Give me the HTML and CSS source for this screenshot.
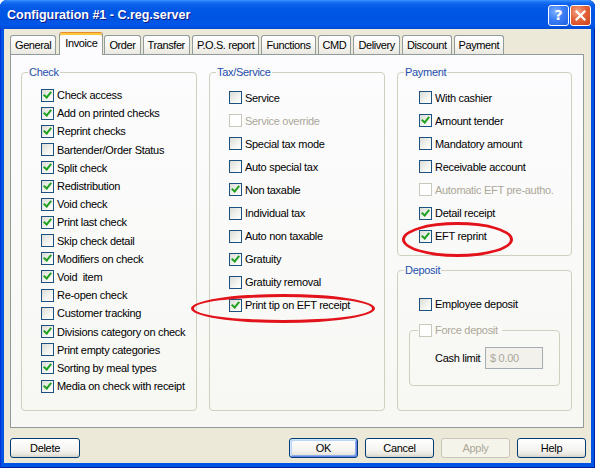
FILE: index.html
```html
<!DOCTYPE html>
<html>
<head>
<meta charset="utf-8">
<title>Configuration #1 - C.reg.server</title>
<link rel="stylesheet" href="styles.css">
</head>
<body>
<div class="window">
  <div class="titlebar">
    <span class="title">Configuration #1 - C.reg.server</span>
    <div class="tb-btns">
      <span class="tb-btn tb-help">?</span>
      <span class="tb-btn tb-close"><svg width="11" height="11" viewBox="0 0 11 11"><path d="M1.5 1.5 L9.5 9.5 M9.5 1.5 L1.5 9.5" stroke="#fff" stroke-width="2.2" stroke-linecap="square"/></svg></span>
    </div>
  </div>
  <div class="client">
    <div class="tabs">
      <span class="tab">General</span>
      <span class="tab active">Invoice</span>
      <span class="tab">Order</span>
      <span class="tab">Transfer</span>
      <span class="tab">P.O.S. report</span>
      <span class="tab">Functions</span>
      <span class="tab">CMD</span>
      <span class="tab">Delivery</span>
      <span class="tab">Discount</span>
      <span class="tab">Payment</span>
    </div>
    <div class="panel">
      <div class="group g-check">
        <span class="legend">Check</span>
        <div class="row"><span class="cb on"></span>Check access</div>
        <div class="row"><span class="cb on"></span>Add on printed checks</div>
        <div class="row"><span class="cb on"></span>Reprint checks</div>
        <div class="row"><span class="cb"></span>Bartender/Order Status</div>
        <div class="row"><span class="cb on"></span>Split check</div>
        <div class="row"><span class="cb on"></span>Redistribution</div>
        <div class="row"><span class="cb on"></span>Void check</div>
        <div class="row"><span class="cb on"></span>Print last check</div>
        <div class="row"><span class="cb"></span>Skip check detail</div>
        <div class="row"><span class="cb on"></span>Modifiers on check</div>
        <div class="row"><span class="cb on"></span>Void &nbsp;item</div>
        <div class="row"><span class="cb"></span>Re-open check</div>
        <div class="row"><span class="cb"></span>Customer tracking</div>
        <div class="row"><span class="cb on"></span>Divisions category on check</div>
        <div class="row"><span class="cb"></span>Print empty categories</div>
        <div class="row"><span class="cb on"></span>Sorting by meal types</div>
        <div class="row"><span class="cb on"></span>Media on check with receipt</div>
      </div>
      <div class="group g-tax">
        <span class="legend">Tax/Service</span>
        <div class="row wide"><span class="cb"></span>Service</div>
        <div class="row wide disabled"><span class="cb"></span>Service override</div>
        <div class="row wide"><span class="cb"></span>Special tax mode</div>
        <div class="row wide"><span class="cb"></span>Auto special tax</div>
        <div class="row wide"><span class="cb on"></span>Non taxable</div>
        <div class="row wide"><span class="cb"></span>Individual tax</div>
        <div class="row wide"><span class="cb"></span>Auto non taxable</div>
        <div class="row wide"><span class="cb on"></span>Gratuity</div>
        <div class="row wide"><span class="cb"></span>Gratuity removal</div>
        <div class="row wide"><span class="cb on"></span>Print tip on EFT receipt</div>
      </div>
      <div class="col3">
        <div class="group g-pay">
          <span class="legend">Payment</span>
          <div class="row wide"><span class="cb"></span>With cashier</div>
          <div class="row wide"><span class="cb on"></span>Amount tender</div>
          <div class="row wide"><span class="cb"></span>Mandatory amount</div>
          <div class="row wide"><span class="cb"></span>Receivable account</div>
          <div class="row wide disabled"><span class="cb"></span>Automatic EFT pre-autho.</div>
          <div class="row wide"><span class="cb on"></span>Detail receipt</div>
          <div class="row wide"><span class="cb on"></span>EFT reprint</div>
        </div>
        <div class="group g-dep">
          <span class="legend">Deposit</span>
          <div class="row wide"><span class="cb"></span>Employee deposit</div>
          <div class="group g-force">
            <span class="legend legend-cb disabled"><span class="cb"></span>Force deposit</span>
            <div class="cash-row">
              <span class="cash-label">Cash limit</span>
              <span class="cash-input">$ 0.00</span>
            </div>
          </div>
        </div>
      </div>
    </div>
    <div class="buttons">
      <span class="btn btn-delete">Delete</span>
      <div class="btn-group">
        <span class="btn default">OK</span>
        <span class="btn">Cancel</span>
        <span class="btn disabled">Apply</span>
        <span class="btn">Help</span>
      </div>
    </div>
  </div>
  <span class="mark mark-tip"></span>
  <span class="mark mark-eft"></span>
</div>
</body>
</html>
```

FILE: styles.css
```css
html, body {
  margin: 0;
  padding: 0;
  background: #ffffff;
}

body {
  font-family: "Liberation Sans", Arial, sans-serif;
  font-size: 11px;
  letter-spacing: -0.3px;
  color: #000;
}

.window {
  position: relative;
  width: 595px;
  height: 468px;
  box-sizing: border-box;
  background: #0054E3;
  border-radius: 7px 7px 0 0;
  display: flex;
  flex-direction: column;
  overflow: hidden;
  box-shadow: inset 1px 0 #0831D9, inset -1px 0 #001EA0, inset 0 -1px #001EA0;
}

.titlebar {
  height: 29px;
  flex: none;
  display: flex;
  align-items: center;
  justify-content: space-between;
  background: linear-gradient(to bottom, #3D95FF 0px, #1A72F6 2px, #0A5EEA 5px, #0058E6 10px, #0054E3 18px, #0056E7 25px, #004AD4 29px);
}

.title {
  padding-left: 7px;
  color: #ffffff;
  font-family: "Liberation Sans", Arial, sans-serif;
  font-weight: bold;
  font-size: 12.5px;
  letter-spacing: 0;
  text-shadow: 1px 1px #0F1A89;
  margin-top: 1px;
}

.tb-btns {
  display: flex;
  gap: 1px;
  padding-right: 4px;
  margin-top: 1px;
}

.tb-btn {
  width: 21px;
  height: 21px;
  box-sizing: border-box;
  border: 1px solid #ffffff;
  border-radius: 3px;
  display: flex;
  align-items: center;
  justify-content: center;
  color: #ffffff;
  letter-spacing: 0;
}

.tb-help {
  background: radial-gradient(circle at 35% 30%, #7FB1FF 0%, #3C7EF5 45%, #1E5FE6 100%);
  font-family: "DejaVu Sans", sans-serif;
  font-weight: bold;
  font-size: 14px;
  line-height: 19px;
}

.tb-close {
  background: radial-gradient(circle at 35% 30%, #F6A488 0%, #E4643A 45%, #C9421C 100%);
}

.client {
  flex: 1;
  margin: 0 4px 5px 4px;
  background: #ECE9D8;
  padding: 3px 7px 5px 6px;
  display: flex;
  flex-direction: column;
}

.tabs {
  height: 22px;
  flex: none;
  display: flex;
  align-items: flex-end;
  gap: 2px;
  position: relative;
  z-index: 1;
}

.tab {
  height: 19px;
  box-sizing: border-box;
  border: 1px solid #919B9C;
  border-bottom: none;
  border-radius: 3px 3px 0 0;
  background: linear-gradient(to bottom, #FFFFFF 0%, #F7F7F4 50%, #EAE8E0 100%);
  padding: 0 4px;
  line-height: 18px;
  letter-spacing: -0.4px;
  white-space: nowrap;
}

.tab.active {
  height: 23px;
  margin-bottom: -1px;
  padding: 0 5px;
  margin-left: 1px;
  margin-right: -1px;
  border-top: 1px solid #E68B2C;
  box-shadow: inset 0 2px #FFC83C;
  background: #FCFCFE;
  line-height: 20px;
}

.panel {
  flex: 1;
  border: 1px solid #919B9C;
  background: linear-gradient(to bottom, #FCFCFE 0%, #F7F7F3 100%);
  padding: 17px 11px 16px 10px;
  display: flex;
  gap: 12px;
}

.group {
  position: relative;
  border: 1px solid #D0D0BF;
  border-radius: 4px;
  box-sizing: border-box;
}

.legend {
  position: absolute;
  top: -7px;
  left: 6px;
  padding: 0 1px;
  line-height: 13px;
  color: #1F4FAF;
  background: #FAFAF8;
}

.g-check {
  width: 177px;
  padding: 13px 0 0 19px;
}

.g-tax {
  width: 177px;
  padding: 13px 0 0 19px;
}

.col3 {
  flex: 1;
  display: flex;
  flex-direction: column;
  gap: 14px;
}

.g-pay {
  padding: 13px 0 7px 21px;
}

.g-dep {
  flex: 1;
  padding: 22px 11px 0 11px;
}

.row {
  height: 18.2px;
  display: flex;
  align-items: center;
  white-space: nowrap;
}

.row.wide {
  height: 23.1px;
}

.g-dep > .row {
  padding-left: 10px;
}

.cb {
  position: relative;
  width: 13px;
  height: 13px;
  flex: none;
  box-sizing: border-box;
  border: 1px solid #1C5180;
  background: linear-gradient(135deg, #DCDCD7 0%, #F2F2EE 55%, #FFFFFF 100%);
  margin-right: 3px;
}

.cb.on::after {
  content: "";
  position: absolute;
  left: 3px;
  top: 0px;
  width: 3px;
  height: 6px;
  border: solid #21A121;
  border-width: 0 2.4px 2.4px 0;
  transform: rotate(40deg);
}

.disabled {
  color: #ACA899;
}

.disabled .cb {
  border-color: #CAC8BB;
  background: #FFFFFF;
}

.g-force {
  margin-top: 14px;
  height: 56px;
  width: 151px;
  padding: 0;
}

.legend-cb {
  left: 8px;
  top: -7px;
  display: flex;
  align-items: center;
  padding: 0 4px 0 1px;
  background: #F9F9F6;
}

.cash-row {
  display: flex;
  align-items: center;
  padding: 16px 0 0 25px;
}

.cash-label {
  width: 50px;
}

.cash-input {
  width: 58px;
  height: 22px;
  box-sizing: border-box;
  border: 1px solid #A5ACB2;
  background: #F2F1EC;
  color: #ACA899;
  padding-left: 4px;
  line-height: 20px;
}

.buttons {
  flex: none;
  height: 20px;
  margin-top: 10px;
  margin-right: -2px;
  display: flex;
  justify-content: space-between;
}

.btn-group {
  display: flex;
  gap: 7px;
}

.btn {
  width: 69px;
  height: 20px;
  box-sizing: border-box;
  border: 1px solid #003C74;
  border-radius: 3px;
  background: linear-gradient(to bottom, #FFFFFF 0%, #F5F4F0 60%, #E9E7DF 85%, #D6D0C5 100%);
  display: flex;
  align-items: center;
  justify-content: center;
}

.btn-delete {
  width: 70px;
}

.btn.default {
  box-shadow: inset 1px 1px #CEE7FF, inset -1px -1px #6982EE, inset 2px 2px #BCD4F6, inset -2px -2px #89ADE4;
}

.btn.disabled {
  border-color: #C9C7BA;
  background: #F5F4EA;
  color: #ACA899;
}

.mark {
  position: absolute;
  border: 3.5px solid #E3131B;
  border-radius: 50%;
  box-sizing: border-box;
}

.mark-tip {
  left: 191px;
  top: 294px;
  width: 184px;
  height: 29px;
}

.mark-eft {
  left: 402px;
  top: 222px;
  width: 111px;
  height: 35px;
}
```
